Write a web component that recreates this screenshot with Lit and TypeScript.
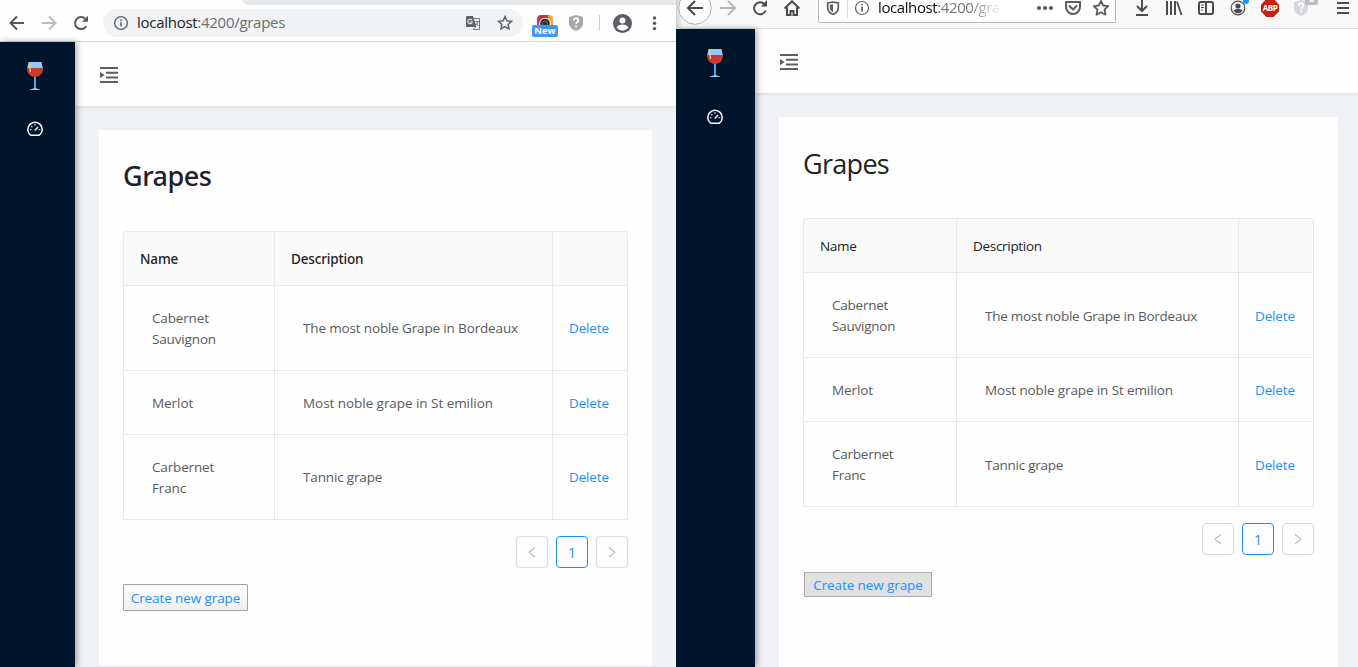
import { LitElement, html, css, svg } from "lit";
import { customElement, property } from "lit/decorators.js";
import { classMap } from "lit/directives/class-map.js";

interface Grape {
  name: string;
  description: string;
}

const GRAPES: Grape[] = [
  { name: "Cabernet Sauvignon", description: "The most noble Grape in Bordeaux" },
  { name: "Merlot", description: "Most noble grape in St emilion" },
  { name: "Carbernet Franc", description: "Tannic grape" },
];

const infoGlyph = svg`
  <circle cx="8" cy="8" r="6.4" fill="none" stroke="#5f6368" stroke-width="1.4"></circle>
  <path d="M7.2 7.2h1.6v4H7.2zM7.2 4.5h1.6v1.5H7.2z" fill="#5f6368"></path>`;

const starGlyph = svg`
  <path d="M8 1.6l1.9 4.2 4.6.5-3.4 3.1.9 4.5L8 11.6l-4 2.3.9-4.5L1.5 6.3l4.6-.5z"
    fill="none" stroke-width="1.5" stroke-linejoin="miter"></path>`;

@customElement("chrome-toolbar")
export class ChromeToolbar extends LitElement {
  static styles = css`
    :host { display: block; height: 42px; box-sizing: border-box; background: #fefefe; border-bottom: 1px solid #dadce0; font-family: "Open Sans", "Noto Sans", sans-serif; }
    svg { display: block; overflow: visible; flex: none; }
    .tabs { display: flex; justify-content: flex-end; height: 5px; }
    .strip { width: 433px; background: #e7eaed; border-bottom-left-radius: 6px; }
    .bar { display: flex; align-items: center; height: 36px; padding-left: 1px; }
    .slot { display: flex; justify-content: center; align-items: center; width: 32px; flex: none; }
    .shield { width: 30px; }
    .pill { display: flex; align-items: center; flex: none; width: 420px; height: 28px; box-sizing: border-box; margin: 0 6px; padding: 0 2px 0 10px; border-radius: 14px; background: #f1f3f4; stroke: #5f6368; }
    .url { flex: 1; padding: 0 0 2px 8px; font-size: 15px; line-height: 20px; letter-spacing: -0.28px; color: #6a6e73; white-space: nowrap; }
    .host { color: #202124; }
    .info { stroke: none; }
    .ext { display: flex; flex-direction: column; align-items: center; width: 32px; height: 22px; padding-top: 5px; }
    .badge { width: 26px; height: 12px; margin-top: -3px; border-radius: 2px; background: #3f97f8; color: #fff; font: 700 9.5px/12px "Open Sans", sans-serif; text-align: center; z-index: 1; }
    .divider { width: 1px; height: 16px; margin: 0 6px 0 8px; background: #cdd0d3; }
  `;

  render() {
    return html`
      <div class="tabs"><div class="strip"></div></div>
      <div class="bar">
        <div class="slot"><svg width="16" height="16" fill="none" stroke="#55595e" stroke-width="2"><path d="M15 8H2M8 1.5L1.5 8 8 14.5"></path></svg></div>
        <div class="slot"><svg width="16" height="16" fill="none" stroke="#babcbe" stroke-width="2"><path d="M1 8h13M8 1.5L14.5 8 8 14.5"></path></svg></div>
        <div class="slot"><svg width="16" height="16"><path d="M13.2 11.2A6 6 0 1 1 12.3 3.8" fill="none" stroke="#55595e" stroke-width="2"></path><path d="M15 .8v6H9z" fill="#55595e"></path></svg></div>
        <div class="pill">
          <svg class="info" width="16" height="16">${infoGlyph}</svg>
          <div class="url"><span class="host">localhost</span>:4200/grapes</div>
          <div class="slot">
            <svg width="16" height="16" stroke="none">
              <path d="M2 1h6l3.500 11H2a1 1 0 0 1-1-1V2a1 1 0 0 1 1-1z" fill="#5f6368"></path>
              <path d="M9 3.500h5.500v11H8l2.500-2.500" fill="none" stroke="#74787c" stroke-width="1"></path>
              <path d="M7 5.200A2.200 2.200 0 1 0 7.300 7H5.200" fill="none" stroke="#e2e4e6" stroke-width="1.200"></path>
              <path d="M10 6.500h4M13 6.500c-.3 2-1.300 3-2.300 3.700M11 8.200l2.500 2.800" fill="none" stroke="#74787c" stroke-width="1"></path>
            </svg>
          </div>
          <div class="slot"><svg width="16" height="16" stroke="#5f6368">${starGlyph}</svg></div>
        </div>
        <div class="ext">
          <svg width="16" height="13">
            <path d="M0 13V4Q0 0 4 0h3v13z" fill="#a24ba0"></path>
            <path d="M3 0h10v6H1z" fill="#cf2f2b"></path>
            <path d="M11 0h1q4 0 4 4v9h-5z" fill="#e7a83c"></path>
            <circle cx="8" cy="8.500" r="5.800" fill="#f6f1f0"></circle>
            <circle cx="8" cy="8.500" r="4.800" fill="#2c2f36"></circle>
            <circle cx="8" cy="8.500" r="2.500" fill="none" stroke="#6a6d75"></circle>
          </svg>
          <div class="badge">New</div>
        </div>
        <div class="slot shield">
          <svg width="14" height="16"><path d="M7 0l7 2v6c0 4-3.500 6.800-7 8-3.500-1.200-7-4-7-8V2z" fill="#a5a9ac"></path>
            <path d="M4.800 5.500c0-3 4.600-3 4.600-.2 0 1.700-2.300 1.700-2.300 3.600M7.100 10.300v1.900" fill="none" stroke="#fff" stroke-width="1.700"></path></svg>
        </div>
        <div class="divider"></div>
        <div class="slot">
          <svg width="19" height="19"><circle cx="9.500" cy="9.500" r="9.500" fill="#5a5e63"></circle><circle cx="9.500" cy="6.500" r="3" fill="#fff"></circle><path d="M3.700 13.600c1.500-4 10.100-4 11.600 0a7 7 0 0 1-11.600 0z" fill="#fff"></path></svg>
        </div>
        <div class="slot"><svg width="4" height="16" fill="#55595e"><circle cx="2.500" cy="3" r="1.700"></circle><circle cx="2.500" cy="8.300" r="1.700"></circle><circle cx="2.500" cy="13.600" r="1.700"></circle></svg></div>
      </div>
    `;
  }
}

@customElement("firefox-toolbar")
export class FirefoxToolbar extends LitElement {
  static styles = css`
    :host { display: flex; align-items: flex-start; height: 29px; box-sizing: border-box; overflow: hidden; padding-left: 2px; background: linear-gradient(90deg, #cfcfd0, #f9f9fa 7px); border-bottom: 1px solid #e0e0e1; font-family: "Open Sans", "Noto Sans", sans-serif; }
    svg { display: block; overflow: visible; flex: none; fill: none; stroke: #4c4c4f; stroke-width: 2; }
    .slot { display: flex; justify-content: center; width: 32px; height: 16px; flex: none; }
    .first { width: 34px; }
    .shield { width: 30px; }
    .menu { width: 33px; }
    .mark { display: flex; justify-content: center; width: 18px; height: 18px; margin-top: -1px; background: #c5200f; clip-path: polygon(30% 0, 70% 0, 100% 30%, 100% 70%, 70% 100%, 30% 100%, 0 70%, 0 30%); color: #fff; font: 700 8px/18px "Open Sans", sans-serif; letter-spacing: -0.5px; }
    .field { display: flex; flex: none; box-sizing: border-box; width: 298px; height: 23px; margin: 0 10px; padding-left: 6px; background: #fff; border: solid #b8b8b9; border-width: 0 1px 1px; border-radius: 0 0 2px 2px; }
    .glyph { width: 16px; }
    .rule { width: 1px; height: 18px; margin: 0 6px 0 6px; background: #dcdcdd; }
    .url { width: 122px; margin: -3px 0 0 8px; font-size: 15px; line-height: 21px; letter-spacing: -0.4px; color: #76767a; white-space: nowrap; -webkit-mask-image: linear-gradient(90deg, #000 92px, transparent 124px); mask-image: linear-gradient(90deg, #000 92px, transparent 124px); }
    .host { color: #0c0c0d; }
    .tools { display: flex; margin-left: auto; }
    .tools .slot { width: 28px; }
    .edge { width: 1px; height: 25px; margin: 0 5px; background: #d7d7db; }
    .slot.blocker { position: relative; }
    .count { position: absolute; left: 19px; top: -9px; width: 13px; height: 14px; border-radius: 2px; background: #bfbfc1; color: #fff; font: 700 10px/14px "Open Sans", sans-serif; text-align: center; }
  `;

  render() {
    return html`
      <div class="slot first"><svg width="16" height="16"><circle cx="8" cy="8" r="16.300" fill="#fcfcfc" stroke="#b4b4b6" stroke-width="1"></circle><path d="M16 8H1.500M8 1L1 8l7 7"></path></svg></div>
      <div class="slot"><svg width="16" height="16"><path d="M0 8h14.500M8 1l7 7-7 7" stroke="#b9b9bc"></path></svg></div>
      <div class="slot"><svg width="16" height="16"><path d="M13.700 10.500A6 6 0 1 1 12.500 4.200"></path><path d="M15 0v6.500H8.800z" fill="#4c4c4f" stroke="none"></path></svg></div>
      <div class="slot"><svg width="16" height="16"><path d="M.7 8.500L8 1.200l7.300 7.300M3 7.500V15h3.500v-4h3v4H13V7.500"></path></svg></div>
      <div class="field">
        <svg class="glyph" width="16" height="16"><path d="M8 2l5.300 1v4.500C13.300 11 10.500 13.500 8 14.300 5.500 13.500 2.700 11 2.700 7.500V3z" stroke="#5c5c60" stroke-width="1.700"></path><path d="M8 4.200v8C5.600 11 4.800 9.300 4.800 7.500V4.800z" fill="#5c5c60" stroke="none"></path></svg>
        <div class="rule"></div>
        <svg class="glyph" width="16" height="16"><circle cx="8" cy="8" r="6.500" stroke="#65656a" stroke-width="1.200"></circle><path d="M8 6.800v4.700M8 4v1.500" stroke="#65656a" stroke-width="1.800"></path></svg>
        <div class="url"><span class="host">localhost</span>:4200/gra</div>
        <div class="tools">
          <div class="slot"><svg width="16" height="16"><g fill="#5c5c60" stroke="none"><circle cx="2" cy="8" r="2.100"></circle><circle cx="8" cy="8" r="2.100"></circle><circle cx="14" cy="8" r="2.100"></circle></g></svg></div>
          <div class="slot"><svg width="16" height="16"><path d="M1 2h14v5a7 7 0 0 1-14 0zM4.500 6L8 9.500 11.500 6" stroke="#5c5c60" stroke-linejoin="round" stroke-linecap="round"></path></svg></div>
          <div class="slot"><svg width="16" height="16"><path d="M8 .8l2.200 4.700 5 .6-3.700 3.500 1 5.100L8 12.200l-4.500 2.500 1-5.100L.8 6.100l5-.6z" stroke="#5c5c60" stroke-width="1.800" stroke-linejoin="round"></path></svg></div>
        </div>
      </div>
      <div class="slot"><svg width="16" height="16"><path d="M8 0v11M3 6l5 5 5-5M2 15h12"></path></svg></div>
      <div class="slot"><svg width="16" height="16"><path d="M1 1v14M5 1v14M9 1v14"></path><path d="M11 1.500L15.500 15" stroke-width="1.800"></path></svg></div>
      <div class="slot"><svg width="16" height="16"><rect x="1" y="2" width="14" height="12" rx="1.500"></rect><path d="M8 2v12"></path><path d="M3 5h3M3 7.500h3M3 10h2" stroke-width="1"></path></svg></div>
      <div class="slot"><svg width="16" height="16"><circle cx="8" cy="8" r="6.800" stroke-width="1.200"></circle><circle cx="8" cy="6" r="2.600" fill="#4c4c4f" stroke="none"></circle><path d="M3.500 10.500c1-2 8-2 9 0a5 5 0 0 1-9 0z" fill="#4c4c4f" stroke="none"></path><circle cx="16" cy="1" r="3" fill="#1496ff" stroke="none"></circle></svg></div>
      <div class="slot"><div class="mark">ABP</div></div>
      <div class="slot shield blocker">
        <svg width="14" height="16"><path d="M7 0l7 2v6c0 4-3.500 6.800-7 8-3.500-1.200-7-4-7-8V2z" fill="#d6d6dd" stroke="none"></path><path d="M4.800 5.500c0-3 4.600-3 4.600-.2 0 1.700-2.300 1.700-2.300 3.600M7.100 10.300v1.900" stroke="#fff" stroke-width="1.700"></path></svg>
        <div class="count">0</div>
      </div>
      <div class="edge"></div>
      <div class="slot menu"><svg width="16" height="16"><path d="M2 3h12M2 8h12M2 13h12"></path></svg></div>
    `;
  }
}

@customElement("grape-page")
export class GrapePage extends LitElement {
  @property({ type: Boolean, reflect: true }) light = false;

  static styles = css`
    :host { display: flex; flex: 1; min-height: 0; background: #f0f1f4; font: 13.5px/21px "Open Sans", "Noto Sans", sans-serif; letter-spacing: -0.15px; color: #5a5a5a; }
    svg { display: block; }
    .sider { display: flex; flex-direction: column; align-items: center; flex: none; box-sizing: border-box; width: 75px; padding: 19px 5px 0 0; background: #001529; box-shadow: 2px 0 6px rgba(0, 21, 41, 0.35); z-index: 1; }
    .gauge { margin-top: 30px; }
    .main { display: flex; flex-direction: column; flex: 1; min-width: 0; }
    .top { display: flex; align-items: center; flex: none; height: 64px; padding: 2px 0 0 25px; box-sizing: border-box; background: #fefefe; box-shadow: 0 1px 4px rgba(0, 21, 41, 0.1); }
    .card { flex: none; box-sizing: border-box; height: 535px; margin: 24px 24px 0; padding: 25px 24px; background: #fefefe; }
    h1 { margin: 0 0 34px; font: 500 27px/42px "Noto Sans", sans-serif; letter-spacing: -0.5px; color: #222226; }
    .table { border: solid #e8e8e8; border-width: 1px 0 0 1px; border-radius: 4px 4px 0 0; }
    .row { display: grid; grid-template-columns: 151px 1fr 75px; height: 85px; }
    .row.short { height: 64px; }
    .head { height: 54px; }
    .cell { display: flex; align-items: center; padding: 0 28px; border: solid #e8e8e8; border-width: 0 1px 1px 0; box-sizing: border-box; }
    .head .cell { padding: 2px 16px 0; background: #fafafa; font-family: "Noto Sans", sans-serif; font-weight: 500; letter-spacing: -0.15px; color: #222226; }
    .head .cell:first-child { border-top-left-radius: 4px; }
    .head .cell:last-child { border-top-right-radius: 4px; }
    .name { padding: 2px 34px 0 28px; }
    .action { padding: 0 0 0 16px; }
    .short .cell { padding-top: 2px; letter-spacing: -0.05px; }
    .link { color: #1890ff; white-space: nowrap; letter-spacing: -0.15px; }
    .pager { display: flex; justify-content: flex-end; gap: 8px; margin: 16px 0; }
    .page { display: grid; place-items: center; box-sizing: border-box; width: 32px; height: 32px; border: 1px solid #d9d9d9; border-radius: 4px; }
    .current { border-color: #1890ff; color: #1890ff; font-size: 14px; }
    .create { display: block; box-sizing: border-box; width: 125px; height: 27px; padding: 2px 0 0; border: 1px solid #a2a2a2; border-radius: 1px; background: linear-gradient(#fdfdfd, #efefef); color: #1890ff; font: inherit; letter-spacing: -0.1px; }

    :host([light]) { letter-spacing: -0.24px; }
    :host([light]) .sider { width: 79px; padding: 19px 1px 0 0; }
    :host([light]) .gauge { margin-top: 31px; }
    :host([light]) .card { height: 550px; margin-right: 20px; padding-top: 26px; }
    :host([light]) h1 { margin-bottom: 33px; font: 400 27px/42px "Open Sans", sans-serif; letter-spacing: -0.7px; }
    :host([light]) .row { grid-template-columns: 153px 1fr 75px; }
    :host([light]) .cell { padding-top: 2px; }
    :host([light]) .short .cell { letter-spacing: -0.12px; }
    :host([light]) .head .cell { font-family: "Open Sans", sans-serif; font-weight: 400; letter-spacing: -0.3px; }
    :host([light]) .create { width: 128px; height: 25px; margin: 17px 0 0 1px; border-color: #adadad; border-radius: 0; background: #e1e1e1; }
  `;

  private row(g: Grape) {
    return html`
      <div class=${classMap({ row: true, short: !g.name.includes(" ") })}>
        <div class="cell name">${g.name}</div>
        <div class="cell">${g.description}</div>
        <div class="cell action"><a class="link">Delete</a></div>
      </div>`;
  }

  render() {
    return html`
      <nav class="sider">
        <svg width="16" height="30" viewBox="0 0 16 30">
          <path d="M1.500 1h13L15.800 7H.2z" fill="#90caf9"></path>
          <path d="M.2 7h15.600c.8 5-3.300 9-7.800 9S-.6 12 .2 7z" fill="#c63a30"></path>
          <path d="M3.500 3C2.700 6 2.500 8 3.500 11" fill="none" stroke="#f3c98a" stroke-width="1.400"></path>
          <path d="M7 16h2v11.500H7z" fill="#5c9fd8"></path>
          <path d="M2.500 29c0-1 3.500-1 5.500-2.500 2 1.500 5.500 1.500 5.500 2.500z" fill="#90caf9"></path>
        </svg>
        <svg class="gauge" width="16" height="16" viewBox="0 0 16 16" fill="none" stroke="#f4f6f8">
          <path d="M3.600 14.200a7.200 7.200 0 1 1 8.800 0z" stroke-width="1.500" stroke-linejoin="round"></path>
          <path d="M7.800 9.600L11 6" stroke-width="1.500"></path>
          <path d="M8 3v1.700M2.900 8.600h1.700M11.500 8.600h1.700M4.200 5l1.200 1.200" stroke="#b9bede" stroke-width="1.300"></path>
        </svg>
      </nav>
      <div class="main">
        <header class="top">
          <svg width="18" height="16" fill="#5b5e63"><path d="M0 0h18v2H0zM6 4.800h12v1.900H6zM6 9.500h12v1.900H6zM0 14h18v2H0zM0 5l4.600 3.100L0 11.200z"></path></svg>
        </header>
        <section class="card">
          <h1>Grapes</h1>
          <div class="table">
            <div class="row head">
              <div class="cell">Name</div>
              <div class="cell">Description</div>
              <div class="cell"></div>
            </div>
            ${GRAPES.map((g) => this.row(g))}
          </div>
          <div class="pager">
            <div class="page"><svg width="8" height="12" fill="none" stroke="#bfbfbf" stroke-width="1.200"><path d="M7 1.500L1 6.300 7 11"></path></svg></div>
            <div class="page current">1</div>
            <div class="page"><svg width="8" height="12" fill="none" stroke="#bfbfbf" stroke-width="1.200"><path d="M1 1.500L7 6.300 1 11"></path></svg></div>
          </div>
          <button class="create">Create new grape</button>
        </section>
      </div>
    `;
  }
}

@customElement("app-root")
export class AppRoot extends LitElement {
  static styles = css`
    :host { display: flex; width: 1358px; height: 667px; overflow: hidden; background: #fff; }
    .window { display: flex; flex-direction: column; flex: none; width: 676px; height: 667px; overflow: hidden; }
    .wide { width: 682px; }
  `;

  render() {
    return html`
      <div class="window"><chrome-toolbar></chrome-toolbar><grape-page></grape-page></div>
      <div class="window wide"><firefox-toolbar></firefox-toolbar><grape-page light></grape-page></div>
    `;
  }
}
